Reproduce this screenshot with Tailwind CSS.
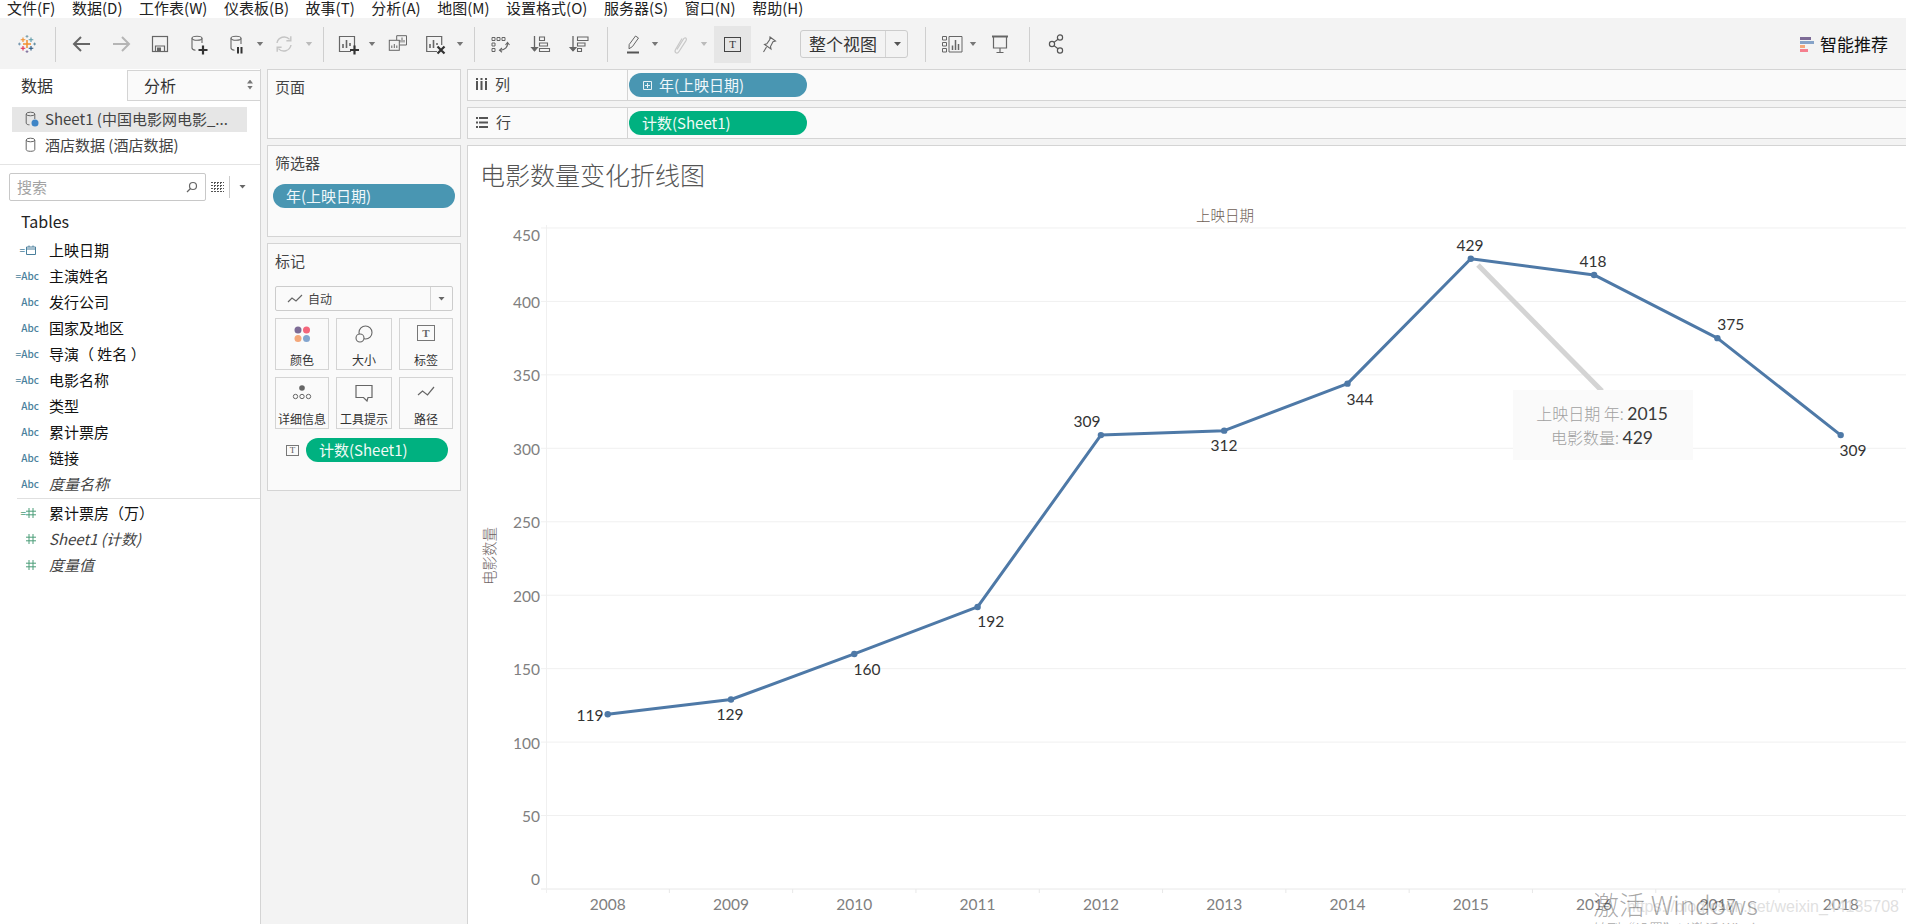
<!DOCTYPE html>
<html lang="zh-CN">
  <head>
    <meta charset="UTF-8" />
    <title>电影数量变化折线图</title>
    <script src="https://cdn.jsdelivr.net/npm/@tailwindcss/browser@4"></script>
  </head>
  <body class="bg-white font-['Noto_Sans_CJK_SC','Noto_Sans',sans-serif] text-[#333]">
    <div class="w-[1906px] h-[924px] overflow-hidden flex flex-col">
      <!-- menu -->
      <div class="h-[18px] bg-white flex items-center pl-[7px] pb-[3px] gap-[16.600px] text-[15px] leading-[14px] text-[#222] shrink-0">
        <span>文件(F)</span><span>数据(D)</span><span>工作表(W)</span><span>仪表板(B)</span><span>故事(T)</span><span>分析(A)</span><span>地图(M)</span><span>设置格式(O)</span><span>服务器(S)</span><span>窗口(N)</span><span>帮助(H)</span>
      </div>

      <!-- toolbar -->
      <div class="h-[51px] bg-[#f3f3f3] flex items-center shrink-0 pt-[1px]">
        <svg class="ml-[15px] w-6 h-6" viewBox="0 0 24 24" fill="none" stroke-width="1.1">
          <path d="M12 8v8M8 12h8" stroke="#f28e2b" stroke-width="1.5"/>
          <path d="M8 5.500v4.600M5.700 7.800h4.600" stroke="#f28e2b"/>
          <path d="M16 5.500v4.600M13.700 7.800h4.600" stroke="#5b9aa8"/>
          <path d="M8 14v4.600M5.700 16.200h4.600" stroke="#e0294a"/>
          <path d="M16 14v4.600M13.700 16.200h4.600" stroke="#1f4e79"/>
          <path d="M12 3v2.800M10.600 4.400h2.800" stroke="#7099a6" stroke-width=".9"/>
          <path d="M12 18.200V21M10.600 19.600h2.800" stroke="#7b6a9a" stroke-width=".9"/>
          <path d="M4.400 10.600v2.800M3 12h2.800" stroke="#6b8ea8" stroke-width=".9"/>
          <path d="M19.600 10.600v2.800M18.200 12H21" stroke="#59879b" stroke-width=".9"/>
        </svg>
        <span class="ml-[16px] w-px h-[35px] bg-[#cfcfcf]"></span>
        <svg class="ml-[14px] w-6 h-6" viewBox="0 0 24 24" fill="none" stroke="#666" stroke-width="2"><path d="M4 12h16M11 5l-7 7 7 7"/></svg>
        <svg class="ml-[15px] w-6 h-6" viewBox="0 0 24 24" fill="none" stroke="#b5b5b5" stroke-width="2"><path d="M4 12h16M13 5l7 7-7 7"/></svg>
        <svg class="ml-[15px] w-6 h-6" viewBox="0 0 24 24" fill="none" stroke="#666" stroke-width="1.2"><rect x="4.500" y="4.500" width="15" height="15"/><path d="M7.500 19.500V14h9v5.500"/><rect x="9" y="15.500" width="4" height="4" fill="#666" stroke="none"/></svg>
        <svg class="ml-[13px] w-6 h-6" viewBox="0 0 24 24" fill="none" stroke="#666" stroke-width="1.1"><ellipse cx="12" cy="6.300" rx="5" ry="2"/><path d="M7 6.300V16c0 1.400 1.500 2 3.500 2.200M17 6.300V11"/><path d="M18 13.500v9M13.500 18h9" stroke="#333" stroke-width="2.2"/></svg>
        <svg class="ml-[15px] w-6 h-6" viewBox="0 0 24 24" fill="none" stroke="#666" stroke-width="1.1"><ellipse cx="12" cy="6.300" rx="5" ry="2"/><path d="M7 6.300V16c0 1.400 1.500 2 3.500 2.200M17 6.300V12"/><path d="M14 15v6.500M17.500 15v6.500" stroke="#333" stroke-width="2"/></svg>
        <span class="ml-[8px] w-2 h-1 bg-[#777] [clip-path:polygon(10%_0,90%_0,50%_100%)]"></span>
        <svg class="ml-[8px] w-6 h-6" viewBox="0 0 24 24" fill="none" stroke="#c4c4c4" stroke-width="1.4"><path d="M5 11a7.300 7.300 0 0 1 12.600-3.600M19 13a7.300 7.300 0 0 1-12.600 3.600"/><path d="M18.800 4.300v4.400h-4.400M5.200 19.700v-4.400h4.400"/></svg>
        <span class="ml-[9px] w-2 h-1 bg-[#bbb] [clip-path:polygon(10%_0,90%_0,50%_100%)]"></span>
        <span class="ml-[10px] w-px h-[35px] bg-[#cfcfcf]"></span>
        <svg class="ml-[12px] w-6 h-6" viewBox="0 0 24 24" fill="none" stroke="#666" stroke-width="1.2"><path d="M15 19.500H3.500v-15h15V14"/><path d="M7 16v-4M10.500 16V8M14 14v-3" stroke-width="1.6"/><path d="M18.500 13.500v9M14 18h9" stroke="#333" stroke-width="2.2"/></svg>
        <span class="ml-[8px] w-2 h-1 bg-[#777] [clip-path:polygon(10%_0,90%_0,50%_100%)]"></span>
        <svg class="ml-[10px] w-6 h-6" viewBox="0 0 24 24" fill="none" stroke="#666" stroke-width="1"><path d="M10.700 8V3.700H20.500V13H13.500"/><rect x="3.300" y="8.300" width="10" height="10"/><path d="M5.800 16v-2.500M8.300 16v-4M10.800 16v-2.500M14 10.500V8M16 10.500V5.500M18 10.500V8"/></svg>
        <svg class="ml-[13px] w-6 h-6" viewBox="0 0 24 24" fill="none" stroke="#666" stroke-width="1.2"><path d="M14 19.500H3.700v-15h15V13"/><path d="M7 16v-4M10.500 16V8M14 13v-2" stroke-width="1.6"/><path d="M14.500 14.500l7 7M21.500 14.500l-7 7" stroke="#333" stroke-width="2.2"/></svg>
        <span class="ml-[9px] w-2 h-1 bg-[#777] [clip-path:polygon(10%_0,90%_0,50%_100%)]"></span>
        <span class="ml-[10px] w-px h-[35px] bg-[#cfcfcf]"></span>
        <svg class="ml-[13px] w-6 h-6" viewBox="0 0 24 24" fill="none" stroke="#666" stroke-width="1"><path d="M4 5.500h3v3H4zM9 5.500h3v3H9zM14 5.500h3v3h-3zM4 11h3v3H4zM4 16.500h3v3H4z"/><path d="M19.500 11c.4 3.800-2 6.800-7.500 7.300" stroke-width="1.200"/><path d="M17.500 13l2-2.500 2 2.500M14 16l-2.500 2.300 2.500 2" stroke-width="1.100"/></svg>
        <svg class="ml-[16px] w-6 h-6" viewBox="0 0 24 24" fill="none" stroke="#666" stroke-width="1.100"><path d="M6.500 4v15" stroke-width="1.300"/><path d="M3.500 15.500l3 3.500 3-3.500z" fill="#666"/><path d="M11.500 5h5v3.500h-5zM11.500 11h8v3h-8zM11.500 16.500h10v3h-10z"/></svg>
        <svg class="ml-[15px] w-6 h-6" viewBox="0 0 24 24" fill="none" stroke="#666" stroke-width="1.100"><path d="M6 4v15" stroke-width="1.300"/><path d="M3 15.500L6 19l3-3.500z" fill="#666"/><path d="M10.500 5H21v3.500H10.500zM10.500 11H18v3h-7.500zM10.500 16.500h4v3h-4z"/></svg>
        <span class="ml-[16px] w-px h-[35px] bg-[#cfcfcf]"></span>
        <svg class="ml-[13px] w-6 h-6" viewBox="0 0 24 24" fill="none" stroke="#666" stroke-width="1"><path d="M14.500 4l3 2-6 8.500-3.500 2.300.2-4.300z"/><path d="M6 20.500h12" stroke="#555" stroke-width="2"/></svg>
        <span class="ml-[6px] w-2 h-1 bg-[#777] [clip-path:polygon(10%_0,90%_0,50%_100%)]"></span>
        <svg class="ml-[9px] w-6 h-6" viewBox="0 0 24 24" fill="none" stroke="#c8c8c8" stroke-width="1.200"><path d="M9 17.500l6.500-10.500c1.400-2.300 3.900-.7 2.500 1.600L11 19.500c-2 3-5.200 1-3.300-2.200L14 6.500"/></svg>
        <span class="ml-[8px] w-2 h-1 bg-[#bbb] [clip-path:polygon(10%_0,90%_0,50%_100%)]"></span>
        <span class="ml-[6px] w-[37px] h-[37px] bg-[#e6e6e6] flex items-center justify-center">
          <span class="w-[17px] h-[15px] border border-[#444] flex items-center justify-center text-[11px] leading-none font-['Liberation_Serif',serif] text-[#333]">T</span>
        </span>
        <svg class="ml-[6px] w-6 h-6" viewBox="0 0 24 24" fill="none" stroke="#666" stroke-width="1.100"><path d="M13 5l5.500 4-2.500.8-2.500 4.700.5 2.500-6.500-4.500 2.300-.8 3-4.200zM9.500 15L6.500 20"/></svg>
        <span class="ml-[19px] w-[108px] h-[28px] border border-[#ccc] rounded-[3px] flex items-center">
          <span class="w-[84px] text-center text-[17px] leading-[20px] text-[#333]">整个视图</span>
          <span class="w-px h-full bg-[#d4d4d4]"></span>
          <span class="ml-[8px] w-[7px] h-1 bg-[#555] [clip-path:polygon(0_0,100%_0,50%_100%)]"></span>
        </span>
        <span class="ml-[17px] w-px h-[35px] bg-[#cfcfcf]"></span>
        <svg class="ml-[14px] w-6 h-6" viewBox="0 0 24 24" fill="none" stroke="#666" stroke-width="1"><path d="M2.500 4.500h4v3.500h-4zM2.500 10.500h4V14h-4zM2.500 16.500h4V20h-4zM9 4.500h13V20H9z"/><path d="M12.500 18v-4.500M15.500 18V8M18.500 18v-6" stroke-width="1.500"/></svg>
        <span class="ml-[5px] w-2 h-1 bg-[#777] [clip-path:polygon(10%_0,90%_0,50%_100%)]"></span>
        <svg class="ml-[11px] w-6 h-6" viewBox="0 0 24 24" fill="none" stroke="#666" stroke-width="1.200"><path d="M4 4.500h16" stroke-width="2"/><path d="M5.500 4.500V16h13V4.500M12 16v4.500M8.500 20.500h7"/></svg>
        <span class="ml-[17px] w-px h-[35px] bg-[#cfcfcf]"></span>
        <svg class="ml-[14px] w-6 h-6" viewBox="0 0 24 24" fill="none" stroke="#555" stroke-width="1.200"><circle cx="16" cy="5.500" r="2.600"/><circle cx="8" cy="12" r="2.600"/><circle cx="16" cy="18.500" r="2.600"/><path d="M14 7.200L10 10.400M10 13.600l4 3.200"/></svg>
        <div class="ml-auto mr-[18px] flex items-center gap-[6px]">
          <span class="w-[14px] flex flex-col gap-[1px]">
            <span class="h-[3px] w-[11px] bg-[#7d6b96]"></span>
            <span class="h-[3px] w-[14px] bg-[#86a3c8]"></span>
            <span class="h-[3px] w-[5px] bg-[#f4a77a]"></span>
            <span class="h-[3px] w-[8px] bg-[#f57f8e]"></span>
          </span>
          <span class="text-[17px] leading-[20px] text-[#111]">智能推荐</span>
        </div>
      </div>

      <div class="flex flex-1 min-h-0 bg-[#f3f3f3]">
        <!-- data pane -->
        <aside class="w-[261px] shrink-0 bg-white border-r border-[#d4d4d4] text-[#222]">
          <div class="flex h-[32px] border-t border-transparent">
            <div class="w-[127px] flex items-center pl-[21px] pb-[2px] text-[16px] leading-[20px] text-[#333]">数据</div>
            <div class="flex-1 bg-[#fafafa] border-l border-b border-t border-[#d4d4d4] flex items-center pl-[16px] pb-[2px] text-[16px] leading-[20px] text-[#333]">
              分析
              <span class="ml-auto mr-[7px] flex flex-col gap-[2px]">
                <span class="w-[6px] h-[4px] bg-[#777] [clip-path:polygon(50%_0,100%_100%,0_100%)]"></span>
                <span class="w-[6px] h-[4px] bg-[#777] [clip-path:polygon(0_0,100%_0,50%_100%)]"></span>
              </span>
            </div>
          </div>
          <div class="pt-[6px] pl-[12px] pr-[13px] text-[15px] leading-[20px] text-[#444]">
            <div class="h-[25px] bg-[#e6e6e6] flex items-center pl-[12px] pb-[1px] gap-[5px] whitespace-nowrap">
              <svg class="w-[16px] h-[16px]" viewBox="0 0 16 16" fill="none" stroke="#666" stroke-width="1"><ellipse cx="6.500" cy="3" rx="4.300" ry="1.800"/><path d="M2.200 3v9c0 1.200 1.500 1.800 3.300 1.800M10.800 3v5"/><circle cx="11" cy="12" r="3.500" fill="#3f85c6" stroke="none"/></svg>
              <span>Sheet1 (中国电影网电影_...</span>
            </div>
            <div class="h-[25px] mt-px flex items-center pl-[12px] pb-[1px] gap-[5px]">
              <svg class="w-[16px] h-[16px]" viewBox="0 0 16 16" fill="none" stroke="#666" stroke-width="1"><ellipse cx="6.500" cy="3" rx="4.300" ry="1.800"/><path d="M2.200 3v9.500c0 1.200 1.900 1.800 4.300 1.800s4.300-.6 4.300-1.800V3"/></svg>
              <span>酒店数据 (酒店数据)</span>
            </div>
          </div>
          <div class="mt-[6px] border-t border-[#e4e4e4] h-[44px] flex items-center pl-[9px]">
            <div class="w-[197px] h-[28px] border border-[#c8c8c8] rounded-[2px] flex items-center pl-[7px] pr-[7px] text-[15px] leading-[20px] text-[#a3a3a3]">
              搜索
              <svg class="ml-auto w-[12px] h-[12px]" viewBox="0 0 12 12" fill="none" stroke="#666" stroke-width="1.200"><circle cx="7" cy="5" r="3.500"/><path d="M4.500 7.500L1 11"/></svg>
            </div>
            <svg class="ml-[5px] w-[13px] h-[10px]" viewBox="0 0 13 10" fill="none" stroke="#555" stroke-width="1"><path d="M0 .5h13M0 3.500h13M0 6.500h13M0 9.500h13M3.500 0v10M6.500 0v10M9.500 0v10" stroke-dasharray="2 1"/></svg>
            <span class="ml-[5px] w-px h-[22px] bg-[#ccc]"></span>
            <span class="ml-[9px] w-[7px] h-1 bg-[#666] [clip-path:polygon(0_0,100%_0,50%_100%)]"></span>
          </div>
          <div class="h-[26px] flex items-center pl-[21px] text-[16px] leading-[20px] text-[#222]">Tables</div>
          <div class="mt-[3px] text-[15px] leading-[20px] text-[#111]">
            <div class="h-[26px] flex items-center"><span class="w-[49px] pr-[13px] flex justify-end items-center text-[#4a7f9c]"><span class="text-[10px] leading-none mr-[1px]">=</span><svg class="w-[10px] h-[10px]" viewBox="0 0 10 10" fill="none" stroke="#4a7f9c"><path d="M.5 2h9v7.500h-9zM.5 4h9M3 .5V2M7 .5V2"/></svg></span>上映日期</div>
            <div class="h-[26px] flex items-center"><span class="w-[49px] pr-[10px] text-right text-[10px] font-medium leading-none text-[#4a7f9c]">=Abc</span>主演姓名</div>
            <div class="h-[26px] flex items-center"><span class="w-[49px] pr-[10px] text-right text-[10px] font-medium leading-none text-[#4a7f9c]">Abc</span>发行公司</div>
            <div class="h-[26px] flex items-center"><span class="w-[49px] pr-[10px] text-right text-[10px] font-medium leading-none text-[#4a7f9c]">Abc</span>国家及地区</div>
            <div class="h-[26px] flex items-center"><span class="w-[49px] pr-[10px] text-right text-[10px] font-medium leading-none text-[#4a7f9c]">=Abc</span>导演（ 姓名 ）</div>
            <div class="h-[26px] flex items-center"><span class="w-[49px] pr-[10px] text-right text-[10px] font-medium leading-none text-[#4a7f9c]">=Abc</span>电影名称</div>
            <div class="h-[26px] flex items-center"><span class="w-[49px] pr-[10px] text-right text-[10px] font-medium leading-none text-[#4a7f9c]">Abc</span>类型</div>
            <div class="h-[26px] flex items-center"><span class="w-[49px] pr-[10px] text-right text-[10px] font-medium leading-none text-[#4a7f9c]">Abc</span>累计票房</div>
            <div class="h-[26px] flex items-center"><span class="w-[49px] pr-[10px] text-right text-[10px] font-medium leading-none text-[#4a7f9c]">Abc</span>链接</div>
            <div class="h-[26px] flex items-center italic text-[#444]"><span class="w-[49px] pr-[10px] text-right text-[10px] font-medium not-italic leading-none text-[#4a7f9c]">Abc</span>度量名称</div>
            <div class="ml-[17px] border-t border-[#e0e0e0] mt-px"></div>
            <div class="h-[26px] mt-px flex items-center"><span class="w-[49px] pr-[13px] flex justify-end items-center"><span class="text-[10px] leading-none text-[#4a9d78]">=</span><svg class="w-[10px] h-[10px]" viewBox="0 0 10 10" stroke="#4a9d78"><path d="M3 0v10M7 0v10M0 3.200h10M0 6.800h10"/></svg></span>累计票房（万）</div>
            <div class="h-[26px] flex items-center italic text-[#444]"><span class="w-[49px] pr-[13px] flex justify-end items-center"><svg class="w-[10px] h-[10px]" viewBox="0 0 10 10" stroke="#4a9d78"><path d="M3 0v10M7 0v10M0 3.200h10M0 6.800h10"/></svg></span>Sheet1 (计数)</div>
            <div class="h-[26px] flex items-center italic text-[#444]"><span class="w-[49px] pr-[13px] flex justify-end items-center"><svg class="w-[10px] h-[10px]" viewBox="0 0 10 10" stroke="#4a9d78"><path d="M3 0v10M7 0v10M0 3.200h10M0 6.800h10"/></svg></span>度量值</div>
          </div>
        </aside>

        <!-- pages, filters, marks -->
        <div class="w-[194px] ml-[6px] shrink-0 flex flex-col gap-[6px] text-[15px] leading-[20px] text-[#444]">
          <div class="h-[70px] bg-[#fafafa] border border-[#d4d4d4] pl-[7px] pt-[7px]">页面</div>
          <div class="h-[92px] bg-[#fafafa] border border-[#d4d4d4] pl-[5px] pt-[7px]">
            <div class="pl-[2px]">筛选器</div>
            <div class="mt-[11px] w-[182px] h-[24px] rounded-full bg-[#4996b2] text-[#f0f7fa] text-[15px] flex items-center pl-[13px]">年(上映日期)</div>
          </div>
          <div class="h-[248px] bg-[#fafafa] border border-[#d4d4d4] px-[7px] pt-[7px]">
            <div>标记</div>
            <div class="mt-[15px] h-[25px] border border-[#ccc] rounded-[2px] flex items-center pl-[11px] text-[12px] text-[#444]">
              <svg class="w-[16px] h-[10px] mr-[5px]" viewBox="0 0 16 10" fill="none" stroke="#666" stroke-width="1.200"><path d="M1 8l4-4 4 3 6-6"/></svg>
              自动
              <span class="ml-auto w-px h-full bg-[#d4d4d4]"></span>
              <span class="mx-[7px] w-[7px] h-1 bg-[#666] [clip-path:polygon(0_0,100%_0,50%_100%)]"></span>
            </div>
            <div class="mt-[7px] grid grid-cols-[54px_56px_54px] gap-x-[7px] gap-y-[7px] text-[12px] leading-[16px] text-[#333]">
              <div class="h-[52px] border border-[#d4d4d4] flex flex-col items-center pt-[6px]">
                <svg class="w-[18px] h-[18px]" viewBox="0 0 18 18"><circle cx="5" cy="5" r="3.500" fill="#7d6b96"/><circle cx="13.500" cy="5" r="3.500" fill="#f4657b"/><circle cx="5" cy="13.500" r="3.500" fill="#f4a77a"/><circle cx="13.500" cy="13.500" r="3.500" fill="#83a5cf"/></svg>
                <span class="mt-[9px]">颜色</span>
              </div>
              <div class="h-[52px] border border-[#d4d4d4] flex flex-col items-center pt-[6px]">
                <svg class="w-[18px] h-[18px]" viewBox="0 0 18 18" fill="none" stroke="#666" stroke-width="1.100"><circle cx="10.500" cy="7.500" r="6.500"/><circle cx="5" cy="13" r="4" fill="#fafafa"/></svg>
                <span class="mt-[9px]">大小</span>
              </div>
              <div class="h-[52px] border border-[#d4d4d4] flex flex-col items-center pt-[6px]">
                <span class="w-[18px] h-[16px] mb-[2px] border-[1.500px] border-[#777] flex items-center justify-center text-[11px] leading-none font-bold font-['Liberation_Serif',serif] text-[#666]">T</span>
                <span class="mt-[9px]">标签</span>
              </div>
              <div class="h-[52px] border border-[#d4d4d4] flex flex-col items-center pt-[6px]">
                <svg class="w-[20px] h-[18px]" viewBox="0 0 20 18" fill="none" stroke="#666"><circle cx="10" cy="4" r="2.800" fill="#666" stroke="none"/><circle cx="3.500" cy="12.500" r="2.200"/><circle cx="10" cy="12.500" r="2.200"/><circle cx="16.500" cy="12.500" r="2.200"/></svg>
                <span class="mt-[9px]">详细信息</span>
              </div>
              <div class="h-[52px] border border-[#d4d4d4] flex flex-col items-center pt-[6px]">
                <svg class="w-[18px] h-[18px]" viewBox="0 0 18 18" fill="none" stroke="#666" stroke-width="1.200"><path d="M1 1.500h16v12h-4l-1 3.500-3.500-3.500H1z"/></svg>
                <span class="mt-[9px]">工具提示</span>
              </div>
              <div class="h-[52px] border border-[#d4d4d4] flex flex-col items-center pt-[6px]">
                <svg class="w-[18px] h-[18px]" viewBox="0 0 18 18" fill="none" stroke="#666" stroke-width="1.200"><path d="M1 11l4.500-4 5 4L17 3"/></svg>
                <span class="mt-[9px]">路径</span>
              </div>
            </div>
            <div class="mt-[9px] flex items-center pl-[11px]">
              <span class="w-[13px] h-[11px] border border-[#777] flex items-center justify-center text-[9px] leading-none font-['Liberation_Serif',serif] text-[#555]">T</span>
              <span class="ml-[7px] w-[142px] h-[24px] rounded-full bg-[#00b180] text-[#f0faf6] text-[15px] flex items-center pl-[13px]">计数(Sheet1)</span>
            </div>
          </div>
        </div>

        <!-- shelves and view -->
        <div class="flex-1 min-w-0 ml-[6px] flex flex-col gap-[6px]">
          <div class="h-[32px] shrink-0 bg-[#fafafa] border-y border-l border-[#d4d4d4] flex items-center text-[15px] leading-[20px] text-[#444]">
            <div class="w-[160px] h-full border-r border-[#d4d4d4] flex items-center pl-[8px] pb-[2px] gap-[8px]">
              <svg class="w-[11px] h-[12px]" viewBox="0 0 11 12" fill="#555"><path d="M0 0h2v2H0zM4.500 0h2v2h-2zM9 0h2v2H9zM0 3h2v9H0zM4.500 3h2v9h-2zM9 3h2v9H9z"/></svg>
              列
            </div>
            <div class="ml-px w-[178px] h-[24px] rounded-full bg-[#4996b2] text-[#f0f7fa] text-[15px] flex items-center pl-[14px] gap-[7px]">
              <svg class="w-[9px] h-[9px]" viewBox="0 0 9 9" fill="none" stroke="#e6f1f5"><path d="M.5.500h8v8h-8zM4.500 2v5M2 4.500h5"/></svg>
              年(上映日期)
            </div>
          </div>
          <div class="h-[32px] shrink-0 bg-[#fafafa] border-y border-l border-[#d4d4d4] flex items-center text-[15px] leading-[20px] text-[#444]">
            <div class="w-[160px] h-full border-r border-[#d4d4d4] flex items-center pl-[8px] pb-[2px] gap-[8px]">
              <svg class="w-[12px] h-[11px]" viewBox="0 0 12 11" fill="#555"><path d="M0 0h2v2H0zM3 0h9v2H3zM0 4.500h2v2H0zM3 4.500h9v2H3zM0 9h2v2H0zM3 9h9v2H3z"/></svg>
              行
            </div>
            <div class="ml-px w-[178px] h-[24px] rounded-full bg-[#00b180] text-[#f0faf6] text-[15px] flex items-center pl-[13px]">计数(Sheet1)</div>
          </div>
          <div class="flex-1 min-h-0 bg-white border-t border-l border-[#d4d4d4] overflow-hidden">
            <!-- viewBox uses page coordinates so the plot maths stays simple -->
            <svg id="chart" class="block w-[1438px] h-[778px]" viewBox="468 146 1438 778"></svg>
          </div>
        </div>
      </div>
    </div>

    <script>
      const NS = 'http://www.w3.org/2000/svg';
      const chart = document.getElementById('chart');
      const y0 = 889, yScale = 1.469, x0 = 607.7, xStep = 123.3;
      const sx = (i) => x0 + i * xStep;
      const sy = (v) => y0 - v * yScale;

      function add(tag, attrs, text) {
        const el = document.createElementNS(NS, tag);
        for (const k in attrs) el.setAttribute(k, attrs[k]);
        if (text !== undefined) el.textContent = text;
        chart.appendChild(el);
        return el;
      }

      const numClass = "font-['Lato','Noto_Sans_CJK_SC',sans-serif] text-[15.500px]";

      // grid and y axis
      for (let v = 0; v <= 450; v += 50) {
        add('line', { x1: 541, x2: 1906, y1: sy(v), y2: sy(v), stroke: v ? '#f0f0f0' : '#e8e8e8' });
        const ly = v === 450 ? sy(v) + 7.5 : v === 0 ? sy(v) - 10 : sy(v) + 0.5;
        add('text', { x: 540, y: ly, 'text-anchor': 'end', 'dominant-baseline': 'central', fill: '#808080', class: numClass }, v);
      }
      add('line', { x1: 546.5, x2: 546.5, y1: 225, y2: 893, stroke: '#f0f0f0' });

      // x axis
      for (let i = 0; i <= 10; i++) {
        add('line', { x1: sx(i) + 61.65, x2: sx(i) + 61.65, y1: 889, y2: 893, stroke: '#e8e8e8' });
        add('text', { x: sx(i), y: 904, 'text-anchor': 'middle', 'dominant-baseline': 'central', fill: '#808080', class: numClass }, 2008 + i);
      }

      add('text', { x: 1225, y: 214, 'text-anchor': 'middle', 'dominant-baseline': 'central', fill: '#6e5e56', class: 'text-[14.500px] font-light' }, '上映日期');
      add('text', { x: 480, y: 174, 'dominant-baseline': 'central', fill: '#555', class: 'text-[25px] font-light' }, '电影数量变化折线图');
      add('text', { transform: 'translate(488 556) rotate(-90)', 'text-anchor': 'middle', 'dominant-baseline': 'central', fill: '#6e6464', class: 'text-[14.500px] font-light' }, '电影数量');

      // tooltip leader goes under the line
      add('line', { x1: 1478, y1: 265, x2: 1602, y2: 391, stroke: '#d4d4d4', 'stroke-width': 5 });

      const data = [119, 129, 160, 192, 309, 312, 344, 429, 418, 375, 309];
      const points = data.map((v, i) => sx(i) + ',' + sy(v)).join(' ');
      add('polyline', { points, fill: 'none', stroke: '#4e79a7', 'stroke-width': 3, 'stroke-linejoin': 'round' });
      data.forEach((v, i) => add('circle', { cx: sx(i), cy: sy(v), r: 3.2, fill: '#4e79a7' }));

      const labels = [[590, 715], [730, 713.7], [867, 668.6], [990.7, 621], [1087, 420.6], [1224, 445], [1360, 398.7], [1470, 244.7], [1593, 260.7], [1730.7, 323.7], [1853, 450]];
      labels.forEach(([x, y], i) => add('text', { x, y, 'text-anchor': 'middle', 'dominant-baseline': 'central', fill: '#333', class: numClass }, data[i]));

      // tooltip
      add('rect', { x: 1513, y: 390, width: 180, height: 70, fill: '#fafafa' });
      const tipLabel = 'text-[16px] font-light';
      const line1 = add('text', { x: 1602, y: 413, 'text-anchor': 'middle', 'dominant-baseline': 'central', fill: '#a0a0a0', class: tipLabel }, '上映日期 年: ');
      const line2 = add('text', { x: 1602, y: 437, 'text-anchor': 'middle', 'dominant-baseline': 'central', fill: '#a0a0a0', class: tipLabel }, '电影数量: ');
      [[line1, '2015'], [line2, '429']].forEach(([t, val]) => {
        const s = document.createElementNS(NS, 'tspan');
        s.setAttribute('fill', '#3a3a3a');
        s.setAttribute('class', "font-['Lato',sans-serif] text-[17.500px] font-normal");
        s.textContent = val;
        t.appendChild(s);
      });

      // watermarks
      add('text', { x: 1899, y: 906, 'text-anchor': 'end', 'dominant-baseline': 'central', fill: '#d8d8d8', 'fill-opacity': 0.8, class: "font-['Liberation_Sans',sans-serif] text-[16px]" }, 'https://blog.csdn.net/weixin_44135708');
      add('text', { x: 1593, y: 903, 'dominant-baseline': 'central', fill: '#000', 'fill-opacity': 0.35, class: "font-['Noto_Sans_CJK_SC','Noto_Sans',sans-serif] text-[26px] font-light" }, '激活 Windows');
      add('text', { x: 1593, y: 934, fill: '#000', 'fill-opacity': 0.3, class: 'text-[14px]' }, '转到“设置”以激活 Windows。');
    </script>
  </body>
</html>
